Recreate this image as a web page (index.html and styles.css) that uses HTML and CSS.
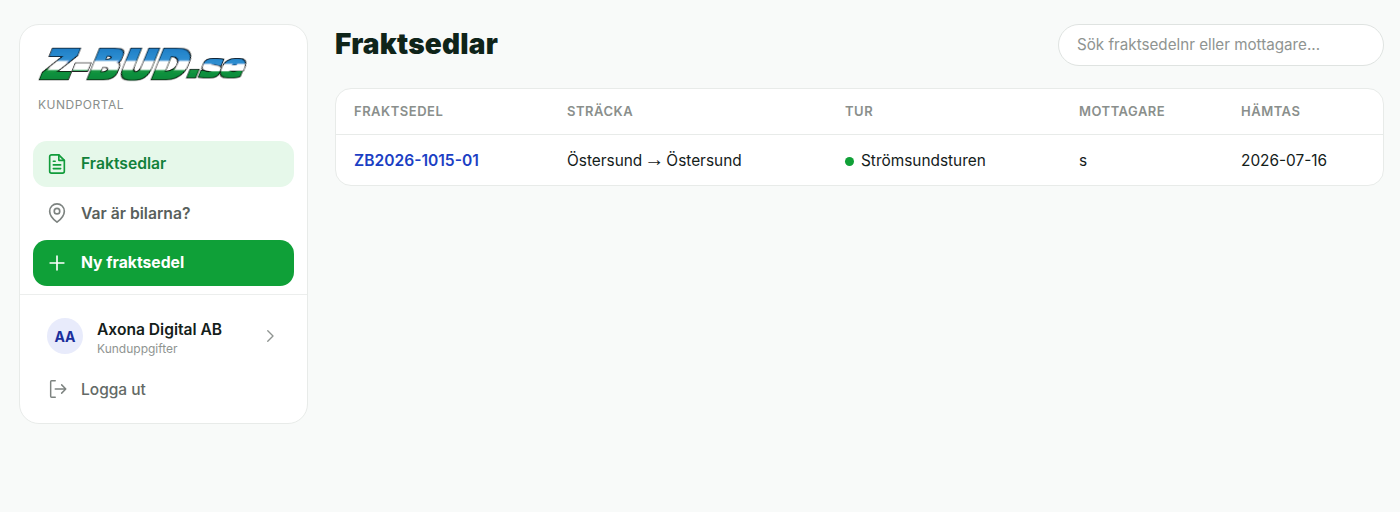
FILE: index.html
```html
<!DOCTYPE html>
<html lang="sv">
<head>
    <meta charset="UTF-8">
    <meta name="viewport" content="width=device-width, initial-scale=1.0">
    <title>Fraktsedlar</title>
    <link rel="stylesheet" href="styles.css">
</head>
<body>
    <div class="layout">
        <aside class="sidebar">
            <div class="brand">
                <svg class="logo" viewBox="0 0 210 36" width="210" height="36" role="img" aria-label="Z-BUD.se">
                    <defs>
                        <linearGradient id="logo-fill" x1="0" y1="0" x2="0" y2="1">
                            <stop offset="0" stop-color="#1473bd"/>
                            <stop offset="0.42" stop-color="#2f8fd2"/>
                            <stop offset="0.46" stop-color="#ffffff"/>
                            <stop offset="0.58" stop-color="#ffffff"/>
                            <stop offset="0.62" stop-color="#12953f"/>
                            <stop offset="1" stop-color="#0b7a33"/>
                        </linearGradient>
                        <filter id="logo-weight" x="-10%" y="-20%" width="120%" height="140%">
                            <feMorphology in="SourceGraphic" operator="dilate" radius="0.5" result="fat"/>
                            <feMorphology in="SourceAlpha" operator="dilate" radius="1.8" result="wide"/>
                            <feFlood flood-color="#0b0f0d"/>
                            <feComposite in2="wide" operator="in" result="edge"/>
                            <feMerge>
                                <feMergeNode in="edge"/>
                                <feMergeNode in="fat"/>
                            </feMerge>
                        </filter>
                    </defs>
                    <g class="logo-mark" transform="translate(15 0) skewX(-22)">
                        <text class="logo-main" x="0" y="33" textLength="144" lengthAdjust="spacingAndGlyphs">Z-BUD</text>
                        <text class="logo-small" x="145" y="32" textLength="56" lengthAdjust="spacingAndGlyphs">.se</text>
                    </g>
                </svg>
                <p class="brand-label">KUNDPORTAL</p>
            </div>

            <nav class="nav">
                <a class="nav-item active" href="#">
                    <svg class="icon" viewBox="0 0 24 24"><path d="M14 2H6a2 2 0 0 0-2 2v16a2 2 0 0 0 2 2h12a2 2 0 0 0 2-2V8z"/><path d="M14 2v6h6"/><path d="M8 13h8M8 17h8M8 9h2"/></svg>
                    Fraktsedlar
                </a>
                <a class="nav-item" href="#">
                    <svg class="icon" viewBox="0 0 24 24"><path d="M20 10c0 6-8 12-8 12s-8-6-8-12a8 8 0 0 1 16 0z"/><circle cx="12" cy="10" r="3"/></svg>
                    Var är bilarna?
                </a>
                <a class="nav-item primary" href="#">
                    <svg class="icon" viewBox="0 0 24 24"><path d="M12 4.500v15M4.500 12h15"/></svg>
                    Ny fraktsedel
                </a>
            </nav>

            <div class="account">
                <a class="account-row" href="#">
                    <span class="avatar">AA</span>
                    <span class="account-text">
                        <span class="account-name">Axona Digital AB</span>
                        <span class="account-sub">Kunduppgifter</span>
                    </span>
                    <svg class="chevron" viewBox="0 0 24 24"><path d="M9 5l7 7-7 7"/></svg>
                </a>
                <a class="logout" href="#">
                    <svg class="icon" viewBox="0 0 24 24"><path d="M9 3H5a1 1 0 0 0-1 1v16a1 1 0 0 0 1 1h4"/><path d="M16 16.500l4.500-4.500L16 7.500M20.500 12H9"/></svg>
                    Logga ut
                </a>
            </div>
        </aside>

        <main class="main">
            <div class="topbar">
                <h1>Fraktsedlar</h1>
                <input class="search" type="text" placeholder="Sök fraktsedelnr eller mottagare...">
            </div>

            <div class="table-card">
                <table class="table">
                    <thead>
                        <tr>
                            <th class="col-id">FRAKTSEDEL</th>
                            <th class="col-route">STRÄCKA</th>
                            <th class="col-tour">TUR</th>
                            <th class="col-recipient">MOTTAGARE</th>
                            <th>HÄMTAS</th>
                        </tr>
                    </thead>
                    <tbody>
                        <tr>
                            <td><a class="waybill" href="#">ZB2026-1015-01</a></td>
                            <td>Östersund <span class="arrow">→</span> Östersund</td>
                            <td><span class="dot"></span>Strömsundsturen</td>
                            <td>s</td>
                            <td>2026-07-16</td>
                        </tr>
                    </tbody>
                </table>
            </div>
        </main>
    </div>
</body>
</html>
```

FILE: styles.css
```css
* {
    box-sizing: border-box;
}
body {
    font-family: Inter, "Liberation Sans", sans-serif;
    background-color: #f8faf9;
    color: #14201a;
    margin: 0;
    padding: 0;
}
a {
    text-decoration: none;
    color: inherit;
}
.layout {
    display: flex;
    align-items: flex-start;
    gap: 27px;
    padding: 24px 16px 0 19px;
}

/* sidomeny */
.sidebar {
    width: 289px;
    flex-shrink: 0;
    height: 400px;
    background-color: #ffffff;
    border: 1px solid #e8ebe9;
    border-radius: 20px;
    display: flex;
    flex-direction: column;
}
.brand {
    padding: 20px 18px 0;
}
.logo {
    display: block;
    overflow: visible;
}
.logo-mark {
    filter: url(#logo-weight);
}
.logo text {
    font-family: "DejaVu Sans", sans-serif;
    font-weight: 700;
    fill: url(#logo-fill);
}
.logo-main {
    font-size: 39px;
}
.logo-small {
    font-size: 29px;
}
.brand-label {
    margin: 16px 0 0;
    font-size: 12px;
    letter-spacing: 0.5px;
    color: #8a8f8c;
}
.nav {
    margin-top: 29px;
    padding: 0 13px 8.5px;
    display: flex;
    flex-direction: column;
    gap: 4px;
    border-bottom: 1px solid #eceeed;
}
.nav-item {
    display: flex;
    align-items: center;
    gap: 13px;
    height: 45.5px;
    padding: 0 13px;
    border-radius: 14px;
    font-size: 15.7px;
    font-weight: 600;
    color: #59605c;
}
.nav-item .icon {
    color: #7d8380;
}
.nav-item.active {
    background-color: #e6f8ea;
    color: #11813a;
}
.nav-item.active .icon {
    color: #119c3b;
}
.nav-item.primary {
    background-color: #0fa038;
    color: #ffffff;
    font-weight: 700;
}
.nav-item.primary .icon {
    color: #ffffff;
}
.icon {
    width: 22px;
    height: 22px;
    flex-shrink: 0;
    fill: none;
    stroke: currentColor;
    stroke-width: 1.8;
    stroke-linecap: round;
    stroke-linejoin: round;
}
.account {
    padding: 21px 27px 0;
}
.account-row {
    display: flex;
    align-items: center;
    gap: 14px;
}
.avatar {
    width: 36px;
    height: 36px;
    border-radius: 50%;
    background-color: #e8ebfb;
    color: #1a2f9c;
    font-size: 14px;
    font-weight: 700;
    display: flex;
    align-items: center;
    justify-content: center;
}
.account-text {
    flex: 1;
    display: flex;
    flex-direction: column;
    gap: 2px;
    padding-top: 4px;
}
.account-name {
    font-size: 15.6px;
    font-weight: 600;
    color: #14201a;
}
.account-sub {
    font-size: 12px;
    color: #8f9491;
}
.chevron {
    width: 18px;
    height: 18px;
    margin-right: 1px;
    fill: none;
    stroke: #8f9491;
    stroke-width: 1.8;
    stroke-linecap: round;
    stroke-linejoin: round;
}
.logout {
    display: flex;
    align-items: center;
    gap: 12px;
    margin-top: 15px;
    height: 36px;
    font-size: 15.5px;
    font-weight: 500;
    color: #636a66;
}
.logout .icon {
    color: #7d8380;
    stroke-width: 1.6;
}

/* innehåll */
.main {
    flex: 1;
    min-width: 0;
}
.topbar {
    display: flex;
    align-items: center;
    justify-content: space-between;
    height: 42px;
}
h1 {
    margin: 0 0 2px;
    font-size: 28px;
    font-weight: 900;
    letter-spacing: 0.2px;
    color: #0f2419;
}
.search {
    width: 326px;
    height: 42px;
    border: 1px solid #dfe3e1;
    border-radius: 21px;
    background-color: #ffffff;
    padding: 0 18px 2px;
    font-family: inherit;
    font-size: 15.2px;
    color: #14201a;
    outline: none;
}
.search::placeholder {
    color: #8f9491;
}
.table-card {
    margin-top: 22px;
    background-color: #ffffff;
    border: 1px solid #e8ebe9;
    border-radius: 16px;
    overflow: hidden;
}
.table {
    width: 100%;
    border-collapse: collapse;
    table-layout: fixed;
}
.table th {
    height: 45px;
    padding: 0 18px;
    text-align: left;
    font-size: 13px;
    font-weight: 600;
    letter-spacing: 0.5px;
    color: #8a8f8c;
    border-bottom: 1px solid #e8ebe9;
}
.table td {
    height: 51px;
    padding: 1px 18px 0;
    font-size: 15.4px;
    color: #14201a;
}
.col-id {
    width: 213px;
}
.col-route {
    width: 278px;
}
.col-tour {
    width: 234px;
}
.col-recipient {
    width: 162px;
}
.waybill {
    color: #1c3fc4;
    font-size: 15.6px;
    font-weight: 600;
}
.arrow {
    font-family: "Liberation Sans", sans-serif;
    font-size: 20px;
    line-height: 0;
    margin: 0 -2.3px;
}
.dot {
    display: inline-block;
    width: 9px;
    height: 9px;
    border-radius: 50%;
    background-color: #10a037;
    margin-right: 7px;
}
```
